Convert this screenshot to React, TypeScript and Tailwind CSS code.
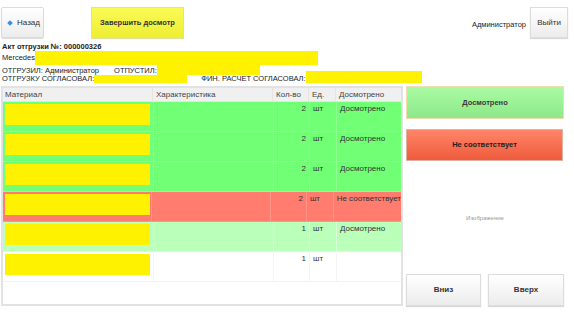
import React from "react";

const rows = [
  { bg: "bg-[#70ff75]", qty: "2", status: "Досмотрено", div: "border-[#8cff90]" },
  { bg: "bg-[#70ff75]", qty: "2", status: "Досмотрено", div: "border-[#8cff90]" },
  { bg: "bg-[#70ff75]", qty: "2", status: "Досмотрено", div: "border-[#8cff90]" },
  { bg: "bg-[#ff7c6e]", qty: "2", status: "Не соответствует", div: "border-[#ff9488]" },
  { bg: "bg-[#baffba]", qty: "1", status: "Досмотрено", div: "border-[#d8ffd8]" },
  { bg: "bg-white", qty: "1", status: "", div: "border-[#f4f4f4]" },
];

const Yellow = ({ w, h = "h-[14px]" }: { w: string; h?: string }) => (
  <span className={`inline-block shrink-0 bg-[#fff200] ${w} ${h}`} />
);

export default function App() {
  return (
    <div
      className="relative w-[574px] h-[314px] bg-white text-[#222] overflow-hidden"
      style={{ fontFamily: '"Liberation Sans", Arial, sans-serif' }}
    >
      {/* top bar */}
      <div className="flex items-start pt-[7px] pl-[1px] pr-[6px] h-[40px]">
        <button className="flex items-center w-[43px] h-[31px] border border-[#dcdcdc] rounded-[2px] bg-gradient-to-b from-white to-[#ececec] shadow-[0_1px_1px_rgba(0,0,0,0.15)] text-[8px] text-[#333]">
          <span className="ml-[6px] w-[4px] h-[4px] rotate-45 bg-[#3a8ee6]" />
          <span className="ml-[5px]">Назад</span>
        </button>
        <button className="ml-[47px] w-[93px] h-[32px] border border-[#e0e09a] bg-gradient-to-b from-[#fafa55] to-[#eeee30] text-[7.5px] font-bold text-[#333]">
          Завершить досмотр
        </button>
        <div className="flex-1" />
        <span className="mt-[12px] text-[7.5px] text-[#222]">Администратор</span>
        <button className="ml-[4px] w-[38px] h-[31px] border border-[#dcdcdc] bg-gradient-to-b from-white to-[#ececec] shadow-[0_1px_1px_rgba(0,0,0,0.15)] text-[8px] text-[#333]">
          Выйти
        </button>
      </div>

      {/* info */}
      <div className="pl-[2px] text-[7.5px] leading-[8px] text-[#222]">
        <div className="font-bold h-[8px] mt-[3px]">Акт отгрузки №: 000000326</div>
        <div className="flex items-center h-[14px]">
          <span>Mercedes</span>
          <Yellow w="w-[283px]" />
        </div>
        <div className="flex items-end h-[10px]">
          <span>ОТГРУЗИЛ: Администратор</span>
          <span className="ml-[15px]">ОТПУСТИЛ:</span>
          <Yellow w="w-[103px]" h="h-[10px]" />
        </div>
        <div className="flex items-end h-[8px]">
          <span>ОТГРУЗКУ СОГЛАСОВАЛ:</span>
          <Yellow w="w-[93px]" h="h-[8px]" />
          <span className="ml-[14px]">ФИН. РАСЧЕТ СОГЛАСОВАЛ:</span>
          <Yellow w="w-[116px]" h="h-[12px]" />
        </div>
      </div>

      {/* main */}
      <div className="flex mt-[3px] pl-[1px] gap-[3px]">
        <div className="w-[402px] h-[220px] border-2 border-[#e2e2e2] overflow-hidden text-[8px] leading-[12px] text-[#333]">
          <div className="flex h-[14px] bg-[#f0f0f0] border-b border-[#e4e4e4] text-[#444] leading-[14px]">
            <div className="w-[150px] pl-[2px] border-r border-[#e4e4e4]">Материал</div>
            <div className="w-[120px] pl-[3px] border-r border-[#e4e4e4]">Характеристика</div>
            <div className="w-[36px] pl-[3px] border-r border-[#e4e4e4]">Кол-во</div>
            <div className="w-[27px] pl-[3px] border-r border-[#e4e4e4]">Ед.</div>
            <div className="flex-1 pl-[3px]">Досмотрено</div>
          </div>
          {rows.map((r, i) => (
            <div key={i} className={`flex h-[30px] border-b ${r.div} ${r.bg}`}>
              <div className="w-[150px] pl-[2px] pt-[2px]">
                <div className="w-[145px] h-[21px] bg-[#fff200]" />
              </div>
              <div className={`w-[120px] border-l ${r.div}`} />
              <div className={`w-[36px] border-l ${r.div} text-right pr-[3px] pt-[1px]`}>{r.qty}</div>
              <div className={`w-[27px] border-l ${r.div} pl-[3px] pt-[1px]`}>шт</div>
              <div className={`flex-1 border-l ${r.div} pl-[3px] pt-[1px] whitespace-nowrap`}>{r.status}</div>
            </div>
          ))}
        </div>

        <div className="w-[158px] h-[220px] flex flex-col">
          <button className="w-[158px] h-[33px] border border-[#f3dcae] bg-gradient-to-b from-[#a9fba2] to-[#8ee88a] text-[7.5px] font-bold text-[#3a3a3a]">
            Досмотрено
          </button>
          <button className="mt-[10px] w-[157px] h-[32px] border border-[#e0b0a0] bg-gradient-to-b from-[#ff8468] to-[#ef5a3c] text-[7.5px] font-bold text-[#222]">
            Не соответствует
          </button>
          <div className="flex-1 flex items-center justify-center text-[6px] text-[#999] pt-[2px]">
            Изображение
          </div>
          <div className="flex gap-[7px]">
            <button className="w-[75px] h-[32px] border border-[#dcdcdc] bg-gradient-to-b from-white to-[#ececec] shadow-[0_1px_1px_rgba(0,0,0,0.15)] text-[8px] font-bold text-[#333]">
              Вниз
            </button>
            <button className="w-[76px] h-[32px] border border-[#dcdcdc] bg-gradient-to-b from-white to-[#ececec] shadow-[0_1px_1px_rgba(0,0,0,0.15)] text-[8px] font-bold text-[#333]">
              Вверх
            </button>
          </div>
        </div>
      </div>
    </div>
  );
}
